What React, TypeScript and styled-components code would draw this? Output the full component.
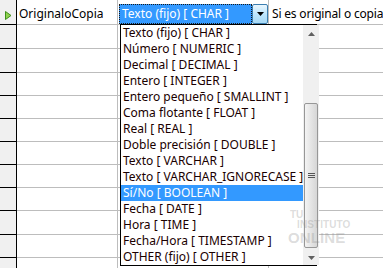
import React from "react";
import styled, { createGlobalStyle } from "styled-components";

const Global = createGlobalStyle`
  html, body { margin: 0; padding: 0; background: #fff; }
  body { font-family: "Noto Sans", "Open Sans", sans-serif; font-size: 12px; color: #000; }
`;

const Page = styled.div`
  position: relative;
  width: 383px;
  height: 268px;
  overflow: hidden;
  background: #fff;
  display: flex;
  flex-direction: column;
`;

const Row = styled.div<{ $h: number }>`
  display: flex;
  height: ${(p) => p.$h}px;
  flex: none;
`;

const HeaderCell = styled.div`
  width: 17px;
  flex: none;
  background: #f0f0f0;
  border-right: 1px solid #000;
  border-bottom: 1px solid #000;
  display: flex;
  align-items: flex-start;
  justify-content: center;
  padding-top: 11px;
  box-sizing: border-box;
`;

const Cell = styled.div<{ $w?: number }>`
  ${(p) => (p.$w ? `width: ${p.$w}px; flex: none;` : "flex: 1;")}
  border-right: 1px solid #bdbdbd;
  border-bottom: 1px solid #bdbdbd;
  box-sizing: border-box;
  padding: 4px 0 0 2px;
  line-height: 20px;
  white-space: nowrap;
  overflow: hidden;
`;

const TypeCell = styled(Cell)`
  padding: 4px 0 0 1px;
  overflow: visible;
`;

const DescCell = styled(Cell)`
  padding-left: 3px;
  letter-spacing: -0.18px;
  border-right: none;
`;

const Combo = styled.div`
  display: flex;
  height: 20px;
`;

const ComboText = styled.div`
  flex: 1;
  background: #3399ff;
  color: #fff;
  border: 1px dotted #1a1a1a;
  line-height: 18px;
  padding-left: 2px;
  box-sizing: border-box;
`;

const ComboButton = styled.div`
  width: 16px;
  flex: none;
  box-sizing: border-box;
  border: 1px solid #3c7fb1;
  border-radius: 2px;
  background: linear-gradient(#eaf6fd, #bee6fd 50%, #a7d9f5);
  display: flex;
  align-items: center;
  justify-content: center;
`;

const BottomStrip = styled.div`
  flex: 1;
  margin-top: 4px;
  background: #f0f0f0;
  border-top: 1px solid #dadada;
`;

const List = styled.div`
  position: absolute;
  left: 120px;
  top: 24px;
  width: 197px;
  height: 242px;
  box-sizing: border-box;
  border: 1px solid #000;
  background: #fff;
  display: flex;
`;

const Items = styled.div`
  flex: 1;
  display: flex;
  flex-direction: column;
`;

const Item = styled.div<{ $sel?: boolean }>`
  height: 16px;
  line-height: 16px;
  padding-left: 2px;
  white-space: nowrap;
  overflow: hidden;
  color: ${(p) => (p.$sel ? "#fff" : "#1a0000")};
  background: ${(p) => (p.$sel ? "#3399ff" : "transparent")};
`;

const ScrollBar = styled.div`
  width: 16px;
  flex: none;
  background: #f0f0f0;
  display: flex;
  flex-direction: column;
  align-items: center;
`;

const ArrowBox = styled.div`
  height: 17px;
  width: 100%;
  display: flex;
  align-items: center;
  justify-content: center;
  flex: none;
`;

const Track = styled.div`
  flex: 1;
  width: 100%;
  padding: 61px 1px 1px 1px;
  box-sizing: border-box;
  display: flex;
`;

const Thumb = styled.div`
  height: 145px;
  flex: 1;
  box-sizing: border-box;
  border: 1px solid #979797;
  border-radius: 2px;
  background: linear-gradient(90deg, #f4f4f4, #e6e6e6 45%, #d6d6d6);
  display: flex;
  align-items: center;
  justify-content: center;
`;

const Watermark = styled.div`
  position: absolute;
  left: 288px;
  top: 210px;
  font-family: "Liberation Sans", Arial, sans-serif;
  font-weight: bold;
  color: rgba(140, 140, 140, 0.3);
  line-height: 1;
`;

const WmSmall = styled.div`
  font-size: 10px;
  padding-left: 2px;
  height: 10px;
`;

const WmMid = styled.div`
  font-size: 10px;
  padding-left: 9px;
  height: 10px;
  letter-spacing: 0.1px;
`;

const WmBig = styled.div`
  font-size: 15px;
  letter-spacing: 0.1px;
`;

const rowHeights = [25, 24, 24, 23, 23, 23, 23, 23, 23, 24, 23, 23];

const items = [
  "Texto (fijo) [ CHAR ]",
  "Número [ NUMERIC ]",
  "Decimal [ DECIMAL ]",
  "Entero [ INTEGER ]",
  "Entero pequeño [ SMALLINT ]",
  "Coma flotante [ FLOAT ]",
  "Real [ REAL ]",
  "Doble precisión [ DOUBLE ]",
  "Texto [ VARCHAR ]",
  "Texto [ VARCHAR_IGNORECASE ]",
  "Sí/No [ BOOLEAN ]",
  "Fecha [ DATE ]",
  "Hora [ TIME ]",
  "Fecha/Hora [ TIMESTAMP ]",
  "OTHER (fijo) [ OTHER ]",
];

export default function App() {
  return (
    <>
      <Global />
      <Page>
        {rowHeights.map((h, i) => (
          <Row key={i} $h={h}>
            <HeaderCell>
              {i === 0 && (
                <svg width="7" height="9" viewBox="0 0 7 9">
                  <path d="M0.5 0.5 L6 4.5 L0.5 8.5 Z" fill="#8fd14f" stroke="#3f8f1c" strokeWidth="1" />
                </svg>
              )}
            </HeaderCell>
            <Cell $w={101}>{i === 0 ? "OriginaloCopia" : ""}</Cell>
            <TypeCell $w={151}>
              {i === 0 && (
                <Combo>
                  <ComboText>Texto (fijo) [ CHAR ]</ComboText>
                  <ComboButton>
                    <svg width="7" height="4" viewBox="0 0 7 4">
                      <path d="M0 0 L7 0 L3.5 4 Z" fill="#000" />
                    </svg>
                  </ComboButton>
                </Combo>
              )}
            </TypeCell>
            <DescCell>{i === 0 ? "Si es original o copia" : ""}</DescCell>
          </Row>
        ))}
        <BottomStrip />
        <List>
          <Items>
            {items.map((t) => (
              <Item key={t} $sel={t.startsWith("Sí/No")}>
                {t}
              </Item>
            ))}
          </Items>
          <ScrollBar>
            <ArrowBox>
              <svg width="7" height="4" viewBox="0 0 7 4">
                <path d="M0 4 L7 4 L3.5 0 Z" fill="#606060" />
              </svg>
            </ArrowBox>
            <Track>
              <Thumb>
                <svg width="7" height="6" viewBox="0 0 7 6">
                  <path d="M0 0.5 H7 M0 2.5 H7 M0 4.5 H7" stroke="#555" strokeWidth="1" />
                </svg>
              </Thumb>
            </Track>
            <ArrowBox>
              <svg width="7" height="4" viewBox="0 0 7 4">
                <path d="M0 0 L7 0 L3.5 4 Z" fill="#606060" />
              </svg>
            </ArrowBox>
          </ScrollBar>
        </List>
        <Watermark>
          <WmSmall>TU</WmSmall>
          <WmMid>INSTITUTO</WmMid>
          <WmBig>ONLINE</WmBig>
        </Watermark>
      </Page>
    </>
  );
}
